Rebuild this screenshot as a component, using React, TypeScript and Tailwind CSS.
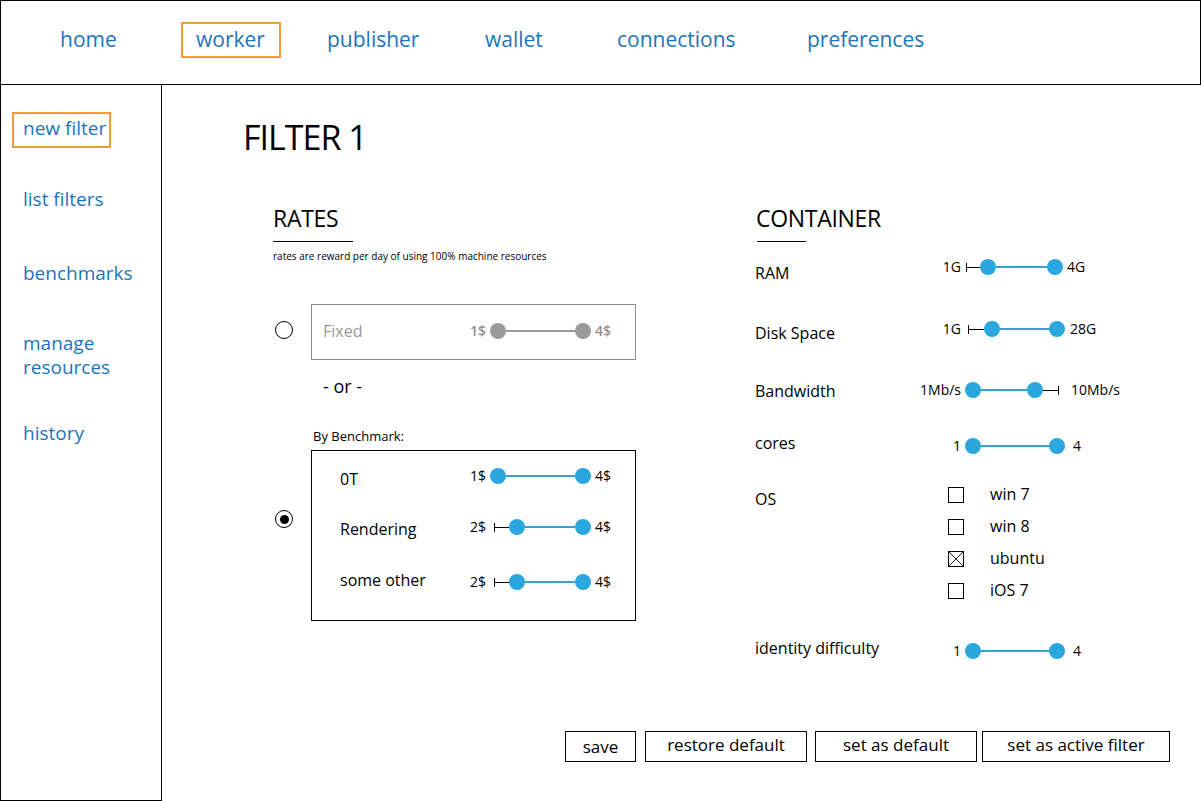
import React from "react";

type Part =
  | { k: "gap"; w: string }
  | { k: "tick" }
  | { k: "thin"; w: string }
  | { k: "line"; w: string }
  | { k: "thumb" };

function Slider({
  left,
  right,
  leftBox,
  rightGap,
  parts,
  gray,
}: {
  left: string;
  right: string;
  leftBox: string;
  rightGap: string;
  parts: Part[];
  gray?: boolean;
}) {
  const labelCls = gray
    ? "text-[14px] leading-4 text-[#8f8f8f] font-semibold"
    : "text-[14px] leading-4 text-black";
  return (
    <div className="flex items-center h-4">
      <div className={`${leftBox} shrink-0 text-right ${labelCls}`}>{left}</div>
      {parts.map((p, i) => {
        if (p.k === "gap") return <div key={i} className={`${p.w} shrink-0`} />;
        if (p.k === "tick") return <div key={i} className="w-px h-[9px] bg-black shrink-0" />;
        if (p.k === "thin") return <div key={i} className={`${p.w} h-px bg-black shrink-0`} />;
        if (p.k === "line")
          return (
            <div
              key={i}
              className={`${p.w} h-[2px] shrink-0 ${gray ? "bg-[#9a9a9a]" : "bg-[#3a9fd3]"}`}
            />
          );
        return (
          <div
            key={i}
            className={`w-4 h-4 rounded-full shrink-0 ${gray ? "bg-[#9a9a9a]" : "bg-[#2ba7df]"}`}
          />
        );
      })}
      <div className={`${rightGap} shrink-0`} />
      <div className={`shrink-0 whitespace-nowrap ${labelCls}`}>{right}</div>
    </div>
  );
}

function Radio({ checked }: { checked?: boolean }) {
  return (
    <div className="w-[18px] h-[18px] rounded-full border-[1.5px] border-black flex items-center justify-center shrink-0">
      {checked && <div className="w-[9px] h-[9px] rounded-full bg-black" />}
    </div>
  );
}

function Checkbox({ checked }: { checked?: boolean }) {
  return (
    <div className="w-4 h-4 border border-black shrink-0 relative">
      {checked && (
        <svg viewBox="0 0 16 16" className="absolute inset-0 w-full h-full">
          <line x1="0" y1="0" x2="16" y2="16" stroke="black" strokeWidth="1" />
          <line x1="16" y1="0" x2="0" y2="16" stroke="black" strokeWidth="1" />
        </svg>
      )}
    </div>
  );
}

const blue = "text-[#1b75bc]";

export default function App() {
  return (
    <div className="w-[1201px] h-[801px] bg-white font-['Open_Sans',sans-serif] text-black overflow-hidden">
      {/* Header */}
      <div className={`h-[85px] border border-black flex items-center pb-[5px] text-[21px] leading-[30px] ${blue}`}>
        <div className="w-[180px] pl-[59px] pb-[3px] shrink-0">home</div>
        <div className="w-[100px] h-[36px] border-2 border-[#f09a38] flex items-center pl-[13px] pb-[3px] shrink-0">
          worker
        </div>
        <div className="ml-[46px] w-[158px] pb-[3px] shrink-0">publisher</div>
        <div className="w-[132px] pb-[3px] shrink-0">wallet</div>
        <div className="w-[190px] pb-[3px] shrink-0">connections</div>
        <div className="pb-[3px] shrink-0">preferences</div>
      </div>

      <div className="flex">
        {/* Sidebar */}
        <div className={`w-[162px] h-[716px] border-l border-r border-b border-black shrink-0 flex flex-col text-[19px] leading-6 ${blue}`}>
          <div className="mt-[27px] ml-[11px] w-[99px] h-[36px] border-2 border-[#f09a38] flex items-center pl-[9px] pb-[4px]">
            new filter
          </div>
          <div className="mt-[39px] pl-[22px]">list filters</div>
          <div className="mt-[50px] pl-[22px]">benchmarks</div>
          <div className="mt-[46px] pl-[22px]">
            manage
            <br />
            resources
          </div>
          <div className="mt-[42px] pl-[22px]">history</div>
        </div>

        {/* Main */}
        <div className="flex-1 h-[716px] flex flex-col">
          <div className="pt-[32px] pl-[81px] text-[34px] leading-[40px] tracking-[-1px]">FILTER 1</div>

          <div className="flex mt-[47px] pl-[111px]">
            {/* Left column: RATES */}
            <div className="w-[482px] shrink-0 flex flex-col">
              <div className="text-[23px] leading-[28px] tracking-[-0.3px]">RATES</div>
              <div className="mt-[9px] w-[80px] h-px bg-black" />
              <div className="mt-[7px] text-[10px] leading-[14px]">
                rates are reward per day of using 100% machine resources
              </div>

              <div className="mt-[41px] flex items-center">
                <div className="ml-[2px] mb-[4px]">
                  <Radio />
                </div>
                <div className="ml-[18px] w-[325px] h-[56px] border border-[#8c8c8c] flex items-center pl-[11px] pb-[2px]">
                  <div className="w-[137px] shrink-0 text-[16px] leading-[22px] text-[#9a9a9a]">Fixed</div>
                  <Slider
                    gray
                    left="1$"
                    right="4$"
                    leftBox="w-[26px]"
                    rightGap="w-[4px]"
                    parts={[{ k: "gap", w: "w-[4px]" }, { k: "thumb" }, { k: "line", w: "w-[69px]" }, { k: "thumb" }]}
                  />
                </div>
              </div>

              <div className="mt-[14px] ml-[50px] text-[18px] leading-6">- or -</div>
              <div className="mt-[29px] ml-[40px] text-[13px] leading-[18px]">By Benchmark:</div>

              <div className="mt-[5px] flex items-start">
                <div className="ml-[2px] mt-[60px]">
                  <Radio checked />
                </div>
                <div className="ml-[18px] w-[325px] h-[171px] border border-black flex flex-col pl-[28px] text-[16px] leading-[22px]">
                  <div className="flex items-start h-[53px]">
                    <div className="w-[120px] pt-[17px] shrink-0">0T</div>
                    <div className="pt-[17px]">
                      <Slider
                        left="1$"
                        right="4$"
                        leftBox="w-[26px]"
                        rightGap="w-[4px]"
                        parts={[{ k: "gap", w: "w-[4px]" }, { k: "thumb" }, { k: "line", w: "w-[69px]" }, { k: "thumb" }]}
                      />
                    </div>
                  </div>
                  <div className="flex items-start h-[51px]">
                    <div className="w-[120px] pt-[14px] shrink-0">Rendering</div>
                    <div className="pt-[15px]">
                      <Slider
                        left="2$"
                        right="4$"
                        leftBox="w-[26px]"
                        rightGap="w-[4px]"
                        parts={[
                          { k: "gap", w: "w-[8px]" },
                          { k: "tick" },
                          { k: "thin", w: "w-[14px]" },
                          { k: "thumb" },
                          { k: "line", w: "w-[50px]" },
                          { k: "thumb" },
                        ]}
                      />
                    </div>
                  </div>
                  <div className="flex items-start">
                    <div className="w-[120px] pt-[14px] shrink-0">some other</div>
                    <div className="pt-[19px]">
                      <Slider
                        left="2$"
                        right="4$"
                        leftBox="w-[26px]"
                        rightGap="w-[4px]"
                        parts={[
                          { k: "gap", w: "w-[8px]" },
                          { k: "tick" },
                          { k: "thin", w: "w-[14px]" },
                          { k: "thumb" },
                          { k: "line", w: "w-[50px]" },
                          { k: "thumb" },
                        ]}
                      />
                    </div>
                  </div>
                </div>
              </div>
            </div>

            {/* Right column: CONTAINER */}
            <div className="flex flex-col text-[16px] leading-[22px]">
              <div className="ml-[1px] text-[23px] leading-[28px] tracking-[-0.3px]">CONTAINER</div>
              <div className="mt-[9px] ml-[2px] w-[49px] h-px bg-black" />

              <div className="flex items-start h-[58px]">
                <div className="w-[160px] pt-[20px] shrink-0">RAM</div>
                <div className="pt-[17px]">
                  <Slider
                    left="1G"
                    right="4G"
                    leftBox="w-[46px]"
                    rightGap="w-[4px]"
                    parts={[
                      { k: "gap", w: "w-[5px]" },
                      { k: "tick" },
                      { k: "thin", w: "w-[13px]" },
                      { k: "thumb" },
                      { k: "line", w: "w-[51px]" },
                      { k: "thumb" },
                    ]}
                  />
                </div>
              </div>

              <div className="flex items-start h-[60px]">
                <div className="w-[160px] pt-[22px] shrink-0">Disk Space</div>
                <div className="pt-[21px]">
                  <Slider
                    left="1G"
                    right="28G"
                    leftBox="w-[46px]"
                    rightGap="w-[5px]"
                    parts={[
                      { k: "gap", w: "w-[7px]" },
                      { k: "tick" },
                      { k: "thin", w: "w-[15px]" },
                      { k: "thumb" },
                      { k: "line", w: "w-[49px]" },
                      { k: "thumb" },
                    ]}
                  />
                </div>
              </div>

              <div className="flex items-start h-[60px]">
                <div className="w-[160px] pt-[20px] shrink-0">Bandwidth</div>
                <div className="pt-[22px]">
                  <Slider
                    left="1Mb/s"
                    right="10Mb/s"
                    leftBox="w-[46px]"
                    rightGap="w-[12px]"
                    parts={[
                      { k: "gap", w: "w-[4px]" },
                      { k: "thumb" },
                      { k: "line", w: "w-[46px]" },
                      { k: "thumb" },
                      { k: "thin", w: "w-[15px]" },
                      { k: "tick" },
                    ]}
                  />
                </div>
              </div>

              <div className="flex items-start h-[50px]">
                <div className="w-[160px] pt-[12px] shrink-0">cores</div>
                <div className="pt-[18px]">
                  <Slider
                    left="1"
                    right="4"
                    leftBox="w-[46px]"
                    rightGap="w-[8px]"
                    parts={[{ k: "gap", w: "w-[4px]" }, { k: "thumb" }, { k: "line", w: "w-[68px]" }, { k: "thumb" }]}
                  />
                </div>
              </div>

              <div className="flex items-start h-[150px]">
                <div className="w-[193px] pt-[18px] shrink-0">OS</div>
                <div className="pt-[9px] flex flex-col">
                  {[
                    { l: "win 7", c: false },
                    { l: "win 8", c: false },
                    { l: "ubuntu", c: true },
                    { l: "iOS 7", c: false },
                  ].map((o) => (
                    <div key={o.l} className="flex items-center h-[32px]">
                      <Checkbox checked={o.c} />
                      <div className="ml-[26px] pb-[3px]">{o.l}</div>
                    </div>
                  ))}
                </div>
              </div>

              <div className="flex items-start">
                <div className="w-[160px] pt-[17px] shrink-0">identity difficulty</div>
                <div className="pt-[23px]">
                  <Slider
                    left="1"
                    right="4"
                    leftBox="w-[46px]"
                    rightGap="w-[8px]"
                    parts={[{ k: "gap", w: "w-[4px]" }, { k: "thumb" }, { k: "line", w: "w-[68px]" }, { k: "thumb" }]}
                  />
                </div>
              </div>
            </div>
          </div>

          {/* Buttons */}
          <div className="mt-auto pb-[39px] pr-[31px] flex justify-end text-[17px] leading-[22px]">
            <div className="w-[71px] h-[31px] border border-black flex items-center justify-center">save</div>
            <div className="ml-[9px] w-[162px] h-[31px] border border-black flex items-center justify-center pb-[3px]">
              restore default
            </div>
            <div className="ml-[8px] w-[162px] h-[31px] border border-black flex items-center justify-center pb-[3px]">
              set as default
            </div>
            <div className="ml-[5px] w-[188px] h-[31px] border border-black flex items-center justify-center pb-[3px]">
              set as active filter
            </div>
          </div>
        </div>
      </div>
    </div>
  );
}
